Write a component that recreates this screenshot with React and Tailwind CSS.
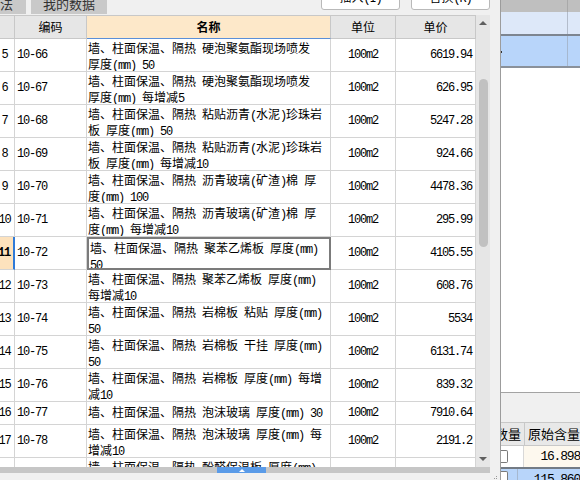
import React from "react";

const mono = "font-['Liberation_Mono'] tracking-[-1.2px]";

function T({ t }) {
  const parts = t.split(/([\x20-\x7e]+)/);
  return parts.map((p, i) =>
    /^[\x20-\x7e]+$/.test(p) ? (
      <span key={i} className={mono}>
        {p}
      </span>
    ) : (
      <React.Fragment key={i}>{p}</React.Fragment>
    )
  );
}

const rows = [
  { n: 5, code: "10-66", name: ["墙、柱面保温、隔热 硬泡聚氨酯现场喷发", "厚度(mm) 50"], price: "6619.94" },
  { n: 6, code: "10-67", name: ["墙、柱面保温、隔热 硬泡聚氨酯现场喷发", "厚度(mm) 每增减5"], price: "626.95" },
  { n: 7, code: "10-68", name: ["墙、柱面保温、隔热 粘贴沥青(水泥)珍珠岩", "板 厚度(mm) 50"], price: "5247.28" },
  { n: 8, code: "10-69", name: ["墙、柱面保温、隔热 粘贴沥青(水泥)珍珠岩", "板 厚度(mm) 每增减10"], price: "924.66" },
  { n: 9, code: "10-70", name: ["墙、柱面保温、隔热 沥青玻璃(矿渣)棉 厚", "度(mm) 100"], price: "4478.36" },
  { n: 10, code: "10-71", name: ["墙、柱面保温、隔热 沥青玻璃(矿渣)棉 厚", "度(mm) 每增减10"], price: "295.99" },
  { n: 11, code: "10-72", name: ["墙、柱面保温、隔热 聚苯乙烯板 厚度(mm)", "50"], price: "4105.55", sel: true },
  { n: 12, code: "10-73", name: ["墙、柱面保温、隔热 聚苯乙烯板 厚度(mm)", "每增减10"], price: "608.76" },
  { n: 13, code: "10-74", name: ["墙、柱面保温、隔热 岩棉板 粘贴 厚度(mm)", "50"], price: "5534" },
  { n: 14, code: "10-75", name: ["墙、柱面保温、隔热 岩棉板 干挂 厚度(mm)", "50"], price: "6131.74" },
  { n: 15, code: "10-76", name: ["墙、柱面保温、隔热 岩棉板 厚度(mm) 每增", "减10"], price: "839.32" },
  { n: 16, code: "10-77", name: ["墙、柱面保温、隔热 泡沫玻璃 厚度(mm) 30"], price: "7910.64" },
  { n: 17, code: "10-78", name: ["墙、柱面保温、隔热 泡沫玻璃 厚度(mm) 每", "增减10"], price: "2191.2" },
  { n: 18, code: "10-79", name: ["墙、柱面保温、隔热 酚醛保温板 厚度(mm)", "50"], price: "3120.45" },
];

function Row({ r }) {
  const two = r.name.length > 1;
  return (
    <div className={`grid grid-cols-[15px_72px_244px_65px_80px] ${two ? "h-[33px]" : "h-[23px]"} shrink-0`}>
      <div
        className={`flex items-center justify-center pr-[5px] border-b border-[#d4d4d4] ${
          r.sel ? "bg-[#fde2bd] border-r-2 border-r-[#2f7ad8] font-bold" : "border-r border-r-[#d4d4d4]"
        }`}
      >
        <span className={mono}>{r.n}</span>
      </div>
      <div className="flex items-center pl-[2px] border-r border-b border-[#d4d4d4]">
        <span className={mono}>{r.code}</span>
      </div>
      <div
        className={`flex flex-col ${two ? "justify-start pt-[2px]" : "justify-center"} pl-[1px] leading-[14px] whitespace-nowrap overflow-hidden ${
          r.sel ? "border-2 border-[#7b7b7b] pl-0 pt-0" : "border-r border-b border-[#d4d4d4]"
        }`}
      >
        {r.name.map((l, i) => (
          <div key={i}>
            <T t={l} />
          </div>
        ))}
      </div>
      <div className="flex items-center justify-center border-r border-b border-[#d4d4d4]">
        <span className={mono}>100m2</span>
      </div>
      <div className="flex items-center justify-end pr-[3px] border-r border-b border-[#d4d4d4]">
        <span className={mono}>{r.price}</span>
      </div>
    </div>
  );
}

export default function App() {
  return (
    <div className="w-[580px] h-[480px] overflow-hidden flex bg-white text-[12px] text-black font-['Noto_Sans_CJK_SC',sans-serif]">
      {/* Dialog */}
      <div className="w-[501px] h-full flex flex-col bg-[#f0f0f0] border-r border-[#9c9c9c] shrink-0">
        {/* top bar */}
        <div className="h-[15px] flex shrink-0 overflow-hidden">
          <div className="w-[26px] h-[14px] bg-[#c9c9c9] flex justify-end items-end overflow-hidden">
            <span className="text-[13px] leading-[13px] mb-[4px] pr-[1px] text-[#333]">做法</span>
          </div>
          <div className="w-[76px] ml-[5px] h-[14px] bg-[#c9c9c9] flex justify-center items-end overflow-hidden">
            <span className="text-[13px] leading-[13px] mb-[4px] text-[#333]">我的数据</span>
          </div>
          <div className="flex-1" />
          <div className="w-[79px] h-[11px] -mt-[1px] bg-white border border-[#b9b9b9] rounded-b-[3px] flex justify-center items-end overflow-hidden">
            <span className="leading-[12px] mb-[4px]">
              插入<T t="(I)" />
            </span>
          </div>
          <div className="w-[79px] ml-[11px] mr-[10px] h-[11px] -mt-[1px] bg-white border border-[#b9b9b9] rounded-b-[3px] flex justify-center items-end overflow-hidden">
            <span className="leading-[12px] mb-[4px]">
              替换<T t="(R)" />
            </span>
          </div>
        </div>
        {/* table + vscroll */}
        <div className="h-[452px] flex shrink-0">
          <div className="w-[476px] flex flex-col bg-white overflow-hidden">
            <div className="grid grid-cols-[15px_72px_244px_65px_80px] h-[24px] shrink-0 border-t border-[#c8c8c8]">
              <div className="bg-[#e6e6e6] border-r border-b border-[#c8c8c8]" />
              <div className="bg-[#e6e6e6] border-r border-b border-[#c8c8c8] flex items-center justify-center">编码</div>
              <div className="bg-[#fde8c9] border-r border-[#c8c8c8] border-b border-b-[#5b8fd8] flex items-center justify-center font-bold">名称</div>
              <div className="bg-[#e6e6e6] border-r border-b border-[#c8c8c8] flex items-center justify-center">单位</div>
              <div className="bg-[#e6e6e6] border-r border-b border-[#c8c8c8] flex items-center justify-center">单价</div>
            </div>
            <div className="flex-1 flex flex-col overflow-hidden">
              {rows.map((r) => (
                <Row key={r.n} r={r} />
              ))}
            </div>
          </div>
          <div className="w-[14px] bg-[#e6e6e6] flex flex-col items-center">
            <div className="h-[13px] flex items-center justify-center pt-[2px]">
              <div className="w-0 h-0 border-l-[4px] border-r-[4px] border-b-[4px] border-l-transparent border-r-transparent border-b-[#5f5f5f]" />
            </div>
            <div className="h-[51px]" />
            <div className="w-[9px] h-[168px] bg-[#c1c1c1] rounded-[5px]" />
            <div className="flex-1" />
            <div className="h-[13px] flex items-center justify-center pb-[3px]">
              <div className="w-0 h-0 border-l-[4px] border-r-[4px] border-t-[4px] border-l-transparent border-r-transparent border-t-[#5f5f5f]" />
            </div>
          </div>
          <div className="flex-1" />
        </div>
        {/* hscroll / splitter */}
        <div className="h-[6px] w-[490px] bg-[#c6c6c6] shrink-0 flex">
          <div className="w-[217px]" />
          <div className="w-[49px] bg-[#5a9be8] flex items-center justify-center">
            <div className="w-0 h-0 border-l-[3px] border-r-[3px] border-b-[3px] border-l-transparent border-r-transparent border-b-white" />
          </div>
        </div>
        <div className="flex-1 flex justify-end items-end pr-[3px] pb-[1px]">
          <div className="grid grid-cols-2 gap-[1px]">
            <div className="w-[1px] h-[1px]" />
            <div className="w-[1px] h-[1px] bg-[#9a9a9a]" />
            <div className="w-[1px] h-[1px] bg-[#9a9a9a]" />
            <div className="w-[1px] h-[1px] bg-[#9a9a9a]" />
          </div>
        </div>
      </div>

      {/* Right background panel */}
      <div className="flex-1 flex flex-col overflow-hidden">
        <div className="h-[12px] flex shrink-0 bg-[#bfbfbf]">
          <div className="w-[67px] border-r border-[#a9a9a9]" />
        </div>
        <div className="h-[22px] flex shrink-0 bg-[#dde8f9]">
          <div className="w-[67px] border-r border-[#b3bccb]" />
        </div>
        <div className="h-[2px] bg-[#7d8590] shrink-0" />
        <div className="h-[30px] flex shrink-0 bg-[#b8d5fa]">
          <div className="w-[67px] border-r border-[#a6b8cf] flex items-center">
            <div className="w-[1px] h-[2px] bg-[#333] mt-[2px]" />
          </div>
        </div>
        <div className="h-[2px] bg-[#8a919a] shrink-0" />
        <div className="h-[324px] bg-white shrink-0" />
        <div className="h-[30px] bg-[#f0f0f0] border-t border-[#a3a3a3] shrink-0" />
        <div className="h-[24px] flex shrink-0 bg-[#e8e8e8] border-t border-b border-[#c8c8c8] whitespace-nowrap overflow-hidden">
          <div className="w-[27px] border-r border-[#c8c8c8] flex items-center justify-end overflow-hidden">
            <span className="text-[13px] pr-[3px]">数量</span>
          </div>
          <div className="flex-1 flex items-center pl-[3px]">
            <span className="text-[13px]">原始含量</span>
          </div>
        </div>
        <div className="h-[23px] flex shrink-0 border-b-2 border-[#737b85]">
          <div className="w-[27px] bg-white border-r border-[#d8d8d8] flex items-center">
            <div className="w-[7px] h-[13px] bg-white border border-[#7a7a7a] border-l-0 rounded-r-[2px]" />
          </div>
          <div className="flex-1 bg-[#fdf8ee] flex items-center pl-[16px] whitespace-nowrap">
            <span className={`${mono} text-[13px]`}>16.898</span>
          </div>
        </div>
        <div className="flex-1 flex bg-[#b8d5fa]">
          <div className="w-[27px] border-r border-[#a6b8cf] flex items-start pt-[2px]">
            <div className="w-[7px] h-[13px] bg-white border border-[#7a7a7a] border-l-0 rounded-r-[2px]" />
          </div>
          <div className="flex-1 flex items-start pt-[1px] pl-[16px] whitespace-nowrap">
            <span className={`${mono} text-[13px]`}>115.860</span>
          </div>
        </div>
      </div>
    </div>
  );
}
